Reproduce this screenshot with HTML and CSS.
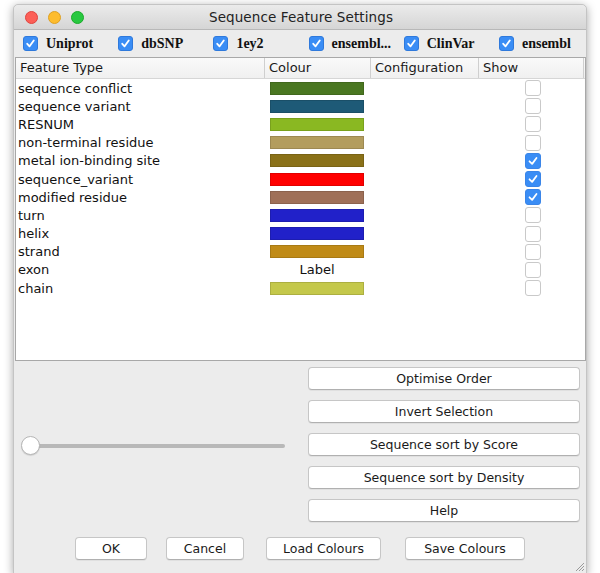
FILE: index.html
```html
<!DOCTYPE html>
<html>
<head>
<meta charset="utf-8">
<link rel="stylesheet" href="styles.css">
</head>
<body>
<div class="window">
  <div class="titlebar">
    <div class="lights">
      <span class="light red"></span>
      <span class="light yellow"></span>
      <span class="light green"></span>
    </div>
    <div class="title">Sequence Feature Settings</div>
  </div>
  <div class="sources">
    <label class="src"><span class="cb on"><svg viewBox="0 0 14 14"><path d="M3.5 7.3 L6 10 L10.5 3.8" /></svg></span>Uniprot</label>
    <label class="src"><span class="cb on"><svg viewBox="0 0 14 14"><path d="M3.5 7.3 L6 10 L10.5 3.8" /></svg></span>dbSNP</label>
    <label class="src"><span class="cb on"><svg viewBox="0 0 14 14"><path d="M3.5 7.3 L6 10 L10.5 3.8" /></svg></span>1ey2</label>
    <label class="src"><span class="cb on"><svg viewBox="0 0 14 14"><path d="M3.5 7.3 L6 10 L10.5 3.8" /></svg></span>ensembl...</label>
    <label class="src"><span class="cb on"><svg viewBox="0 0 14 14"><path d="M3.5 7.3 L6 10 L10.5 3.8" /></svg></span>ClinVar</label>
    <label class="src"><span class="cb on"><svg viewBox="0 0 14 14"><path d="M3.5 7.3 L6 10 L10.5 3.8" /></svg></span>ensembl</label>
  </div>
  <div class="table">
    <div class="thead">
      <div class="th c1">Feature Type</div>
      <div class="th c2">Colour</div>
      <div class="th c3">Configuration</div>
      <div class="th c4">Show</div>
    </div>
    <div class="tbody">
      <div class="tr"><div class="c1">sequence conflict</div><div class="c2"><span class="sw" style="background:#4a7721"></span></div><div class="c3"></div><div class="c4"><span class="show"></span></div></div>
      <div class="tr"><div class="c1">sequence variant</div><div class="c2"><span class="sw" style="background:#1e5a77"></span></div><div class="c3"></div><div class="c4"><span class="show"></span></div></div>
      <div class="tr"><div class="c1">RESNUM</div><div class="c2"><span class="sw" style="background:#8ab822"></span></div><div class="c3"></div><div class="c4"><span class="show"></span></div></div>
      <div class="tr"><div class="c1">non-terminal residue</div><div class="c2"><span class="sw" style="background:#b39d5e"></span></div><div class="c3"></div><div class="c4"><span class="show"></span></div></div>
      <div class="tr"><div class="c1">metal ion-binding site</div><div class="c2"><span class="sw" style="background:#8a7118"></span></div><div class="c3"></div><div class="c4"><span class="show on"><svg viewBox="0 0 16 16"><path d="M4 8.3 L7 11.3 L12 4.5" /></svg></span></div></div>
      <div class="tr"><div class="c1">sequence_variant</div><div class="c2"><span class="sw" style="background:#ff0000"></span></div><div class="c3"></div><div class="c4"><span class="show on"><svg viewBox="0 0 16 16"><path d="M4 8.3 L7 11.3 L12 4.5" /></svg></span></div></div>
      <div class="tr"><div class="c1">modified residue</div><div class="c2"><span class="sw" style="background:#9f7058"></span></div><div class="c3"></div><div class="c4"><span class="show on"><svg viewBox="0 0 16 16"><path d="M4 8.3 L7 11.3 L12 4.5" /></svg></span></div></div>
      <div class="tr"><div class="c1">turn</div><div class="c2"><span class="sw" style="background:#2121c9"></span></div><div class="c3"></div><div class="c4"><span class="show"></span></div></div>
      <div class="tr"><div class="c1">helix</div><div class="c2"><span class="sw" style="background:#2121c9"></span></div><div class="c3"></div><div class="c4"><span class="show"></span></div></div>
      <div class="tr"><div class="c1">strand</div><div class="c2"><span class="sw" style="background:#c08b17"></span></div><div class="c3"></div><div class="c4"><span class="show"></span></div></div>
      <div class="tr"><div class="c1">exon</div><div class="c2 lbl">Label</div><div class="c3"></div><div class="c4"><span class="show"></span></div></div>
      <div class="tr"><div class="c1">chain</div><div class="c2"><span class="sw" style="background:#c4c84b"></span></div><div class="c3"></div><div class="c4"><span class="show"></span></div></div>
    </div>
  </div>
  <div class="lower">
    <div class="slider-area">
      <div class="slider"><span class="thumb"></span></div>
    </div>
    <div class="actions">
      <button class="btn wide">Optimise Order</button>
      <button class="btn wide">Invert Selection</button>
      <button class="btn wide">Sequence sort by Score</button>
      <button class="btn wide">Sequence sort by Density</button>
      <button class="btn wide">Help</button>
    </div>
  </div>
  <div class="bottom">
    <button class="btn ok">OK</button>
    <button class="btn cancel">Cancel</button>
    <button class="btn load">Load Colours</button>
    <button class="btn save">Save Colours</button>
  </div>
  <div class="grip"><svg viewBox="0 0 12 12"><path d="M11 3 L3 11 M11 6 L6 11 M11 9 L9 11"/></svg></div>
</div>
</body>
</html>
```

FILE: styles.css
```css
* { box-sizing: border-box; }
html, body { margin: 0; padding: 0; background: #ffffff; }
body {
  font-family: "DejaVu Sans", "Noto Sans", sans-serif;
  color: #111;
  padding: 4px 0 0 13px;
  height: 573px;
  overflow: hidden;
}
.window {
  position: relative;
  width: 574px;
  height: 570px;
  background: #ececec;
  border: 1px solid #c4c4c4;
  border-radius: 5px 5px 0 0;
  box-shadow: 0 2px 10px rgba(0,0,0,0.35);
  display: flex;
  flex-direction: column;
}
.titlebar {
  height: 25px;
  flex: none;
  display: flex;
  align-items: center;
  background: linear-gradient(#ebebeb, #d5d5d5);
  border-bottom: 1px solid #b8b8b8;
  border-radius: 5px 5px 0 0;
}
.lights { display: flex; gap: 10px; padding-left: 11px; }
.light { width: 13px; height: 13px; border-radius: 50%; display: block; }
.red { background: #fc5f57; border: 1px solid #e0443e; }
.yellow { background: #fdbc2e; border: 1px solid #dea123; }
.green { background: #28c840; border: 1px solid #1aab29; }
.title {
  flex: 1;
  text-align: center;
  font-size: 13.5px;
  color: #222;
  margin-right: 68px;
  letter-spacing: 0.1px;
}
.sources {
  height: 27px;
  flex: none;
  display: flex;
  align-items: center;
  padding-left: 9px;
  background: #ececec;
  overflow: visible;
}
.src {
  width: 95.2px;
  flex: none;
  display: flex;
  align-items: center;
  font-family: "Liberation Serif", serif;
  font-weight: bold;
  font-size: 14px;
  color: #111;
  white-space: nowrap;
}
.cb {
  width: 15px;
  height: 15px;
  border-radius: 3px;
  margin-right: 8px;
  display: inline-block;
  flex: none;
}
.cb.on { background: #3a8df5; border: 1px solid #2e79dc; }
.cb svg, .show svg { width: 100%; height: 100%; display: block; }
.cb path, .show path { fill: none; stroke: #fff; stroke-width: 2; stroke-linecap: round; stroke-linejoin: round; }
.table {
  margin-left: 1px;
  width: 571px;
  height: 304px;
  flex: none;
  background: #fff;
  border: 1px solid #a8a8a8;
  font-size: 13px;
}
.thead {
  display: flex;
  height: 21px;
  border-bottom: 1px solid #d6d6d6;
  background: linear-gradient(#fafafa, #f0f0f0);
}
.th {
  border-right: 1px solid #cfcfcf;
  padding-left: 4px;
  line-height: 20px;
  color: #1a1a1a;
}
.c1 { width: 249px; flex: none; }
.c2 { width: 106px; flex: none; }
.c3 { width: 108px; flex: none; }
.c4 { flex: 1; }
.th.c4 { border-right: 1px solid #cfcfcf; margin-right: 1px; }
.tr { display: flex; height: 18.2px; align-items: center; }
.tr .c1 { padding-left: 2px; white-space: nowrap; }
.tr .c2 { padding-left: 5px; display: flex; align-items: center; }
.sw {
  display: block;
  width: 94px;
  height: 13px;
  box-shadow: inset 0 0 0 1px rgba(0,0,0,0.12);
}
.tr .lbl { justify-content: center; padding-left: 0; padding-right: 2px; }
.tr .c4 { display: flex; justify-content: center; padding-left: 2px; }
.show {
  width: 16px;
  height: 16px;
  border: 1px solid #c9c9c9;
  border-radius: 3px;
  background: #fff;
  display: block;
}
.show.on { background: #3a8df5; border-color: #3a85e8; }
.lower {
  flex: none;
  display: flex;
  padding-top: 6px;
  height: 165px;
}
.slider-area {
  width: 293px;
  display: flex;
  align-items: center;
  padding-left: 7px;
  padding-bottom: 2px;
}
.slider {
  position: relative;
  width: 254px;
  height: 4px;
  background: #b8b8b8;
  border-radius: 2px;
  margin-left: 10px;
}
.thumb {
  position: absolute;
  left: -10px;
  top: -8px;
  width: 19px;
  height: 19px;
  border-radius: 50%;
  background: #fff;
  border: 1px solid #b6b6b6;
  box-shadow: 0 1px 1px rgba(0,0,0,0.12);
}
.actions {
  display: flex;
  flex-direction: column;
  gap: 10px;
  padding-left: 1px;
}
.btn {
  font-family: "DejaVu Sans", sans-serif;
  font-size: 12.5px;
  color: #1a1a1a;
  background: #fff;
  border: 1px solid #c6c6c6;
  border-bottom-color: #b0b0b0;
  border-radius: 4px;
  height: 23px;
  padding: 0;
  box-shadow: 0 1px 0 rgba(0,0,0,0.05);
}
.btn.wide { width: 272px; }
.bottom {
  display: flex;
  padding-left: 61px;
  padding-top: 11px;
}
.ok { width: 72px; margin-right: 19px; }
.cancel { width: 78px; margin-right: 22px; }
.load { width: 115px; margin-right: 24px; }
.save { width: 120px; }
.grip {
  position: absolute;
  right: 1px;
  bottom: 1px;
  width: 12px;
  height: 12px;
}
.grip svg { width: 100%; height: 100%; display: block; }
.grip path { stroke: #9a9a9a; stroke-width: 1; fill: none; }
```
